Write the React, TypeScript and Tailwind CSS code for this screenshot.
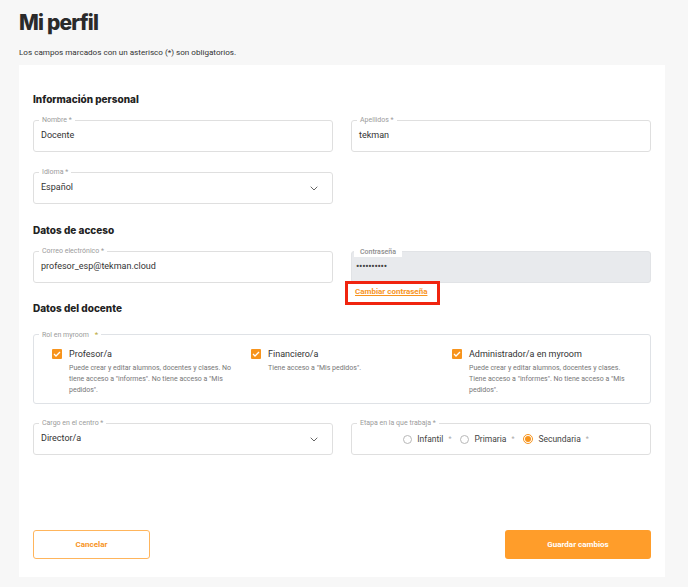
import React from 'react';

const heading = "font-['Inter',sans-serif] font-extrabold text-[10px] leading-[14px] text-[#222]";

const Chevron = () => (
  <svg className="ml-auto shrink-0" width="8" height="5" viewBox="0 0 8 5" fill="none">
    <path d="M0.7 0.7 L4 4 L7.3 0.7" stroke="#555" strokeWidth="0.9" />
  </svg>
);

const Field = ({ label, value, chevron }: { label: string; value: string; chevron?: boolean }) => (
  <div className="relative h-[32px] rounded-[3px] border border-[#dfdfdf] bg-white flex items-center pl-[7px] pr-[14px]">
    <span className="absolute left-[5px] -top-[5px] bg-white px-[3px] text-[7px] leading-[9px] text-[#9b9b9b]">{label}</span>
    <span className="text-[9px] text-[#333]">{value}</span>
    {chevron && <Chevron />}
  </div>
);

const Check = () => (
  <span className="w-[10px] h-[10px] mt-[1px] rounded-[1px] bg-[#f7941d] flex items-center justify-center shrink-0">
    <svg width="8" height="6" viewBox="0 0 8 6" fill="none">
      <path d="M1 3 L3 5 L7 1" stroke="white" strokeWidth="1.3" />
    </svg>
  </span>
);

const roles = [
  { t: 'Profesor/a', d: 'Puede crear y editar alumnos, docentes y clases. No tiene acceso a "informes". No tiene acceso a "Mis pedidos".' },
  { t: 'Financiero/a', d: 'Tiene acceso a "Mis pedidos".' },
  { t: 'Administrador/a en myroom', d: 'Puede crear y editar alumnos, docentes y clases. Tiene acceso a "informes". No tiene acceso a "Mis pedidos".' },
];

const Radio = ({ label, on }: { label: string; on?: boolean }) => (
  <div className="flex items-center">
    {on ? (
      <span className="w-[10px] h-[10px] rounded-full border border-[#f7941d] flex items-center justify-center">
        <span className="w-[6px] h-[6px] rounded-full bg-[#f7941d]" />
      </span>
    ) : (
      <span className="w-[9px] h-[9px] rounded-full border border-[#b8b8b8] bg-white" />
    )}
    <span className="ml-[5px] text-[8.5px] text-[#444]">{label}</span>
    <span className="ml-[5px] text-[7px] text-[#aaa]">*</span>
  </div>
);

export default function App() {
  return (
    <div className="min-h-[587px] bg-[#f7f7f7] px-[19px] pt-[9px] font-['Roboto',sans-serif]">
      <h1 className="font-['Inter',sans-serif] font-extrabold text-[21px] leading-[28px] text-[#2a2a2a] tracking-[-0.8px]">Mi perfil</h1>
      <p className="mt-[9px] text-[8.1px] leading-[12px] text-[#333]">Los campos marcados con un asterisco (*) son obligatorios.</p>

      <div className="mt-[7px] w-[646px] bg-white px-[14px] pt-[27px] pb-[18px]">
        <h2 className={heading}>Información personal</h2>
        <div className="mt-[14px] grid grid-cols-2 gap-x-[18px] gap-y-[20px]">
          <Field label="Nombre *" value="Docente" />
          <Field label="Apellidos *" value="tekman" />
          <Field label="Idioma *" value="Español" chevron />
        </div>

        <h2 className={`${heading} mt-[19px]`}>Datos de acceso</h2>
        <div className="mt-[14px] grid grid-cols-2 gap-x-[18px]">
          <Field label="Correo electrónico *" value="profesor_esp@tekman.cloud" />
          <div className="relative h-[32px] rounded-[3px] border border-[#e1e3e6] bg-[#e8eaed] flex items-center pl-[4px]">
            <span className="absolute left-[2px] -top-[4px] bg-white px-[6px] text-[7px] leading-[9px] font-medium text-[#8d8d8d]">Contraseña</span>
            <span className="text-[10px] leading-[10px] tracking-[-0.3px] text-[#444]">••••••••••</span>
          </div>
        </div>
        <div className="grid grid-cols-2 gap-x-[18px] mt-[4px] h-[10px]">
          <div />
          <div className="relative h-[10px] text-[8px] leading-[10px]">
            <a className="block ml-[4px] font-bold text-[#f7941d] underline">Cambiar contraseña</a>
            <div className="absolute -left-[6px] -top-[6px] w-[95px] h-[24px] border-[3px] border-[#f0240f]" />
          </div>
        </div>

        <h2 className={`${heading} mt-[4px]`}>Datos del docente</h2>
        <div className="relative mt-[19px] h-[70px] rounded-[3px] border border-[#dfe2e6] px-[18px] pt-[13px]">
          <span className="absolute left-[5px] -top-[5px] bg-white px-[3px] text-[7px] leading-[9px] text-[#9b9b9b]">
            Rol en myroom <span className="ml-[4px] text-[#b9a93a] text-[8px]">*</span>
          </span>
          <div className="grid grid-cols-[199px_201px_1fr]">
            {roles.map((r) => (
              <div key={r.t} className="flex gap-[7px]">
                <Check />
                <div>
                  <div className="text-[9px] leading-[12px] text-[#333]">{r.t}</div>
                  <p className="mt-[3px] w-[166px] text-[7px] leading-[11px] text-[#777]">{r.d}</p>
                </div>
              </div>
            ))}
          </div>
        </div>

        <div className="mt-[19px] grid grid-cols-2 gap-x-[18px]">
          <Field label="Cargo en el centro *" value="Director/a" chevron />
          <div className="relative h-[32px] rounded-[3px] border border-[#dfdfdf] flex items-center justify-center gap-[9px] pr-[10px]">
            <span className="absolute left-[5px] -top-[5px] bg-white px-[3px] text-[7px] leading-[9px] text-[#9b9b9b]">Etapa en la que trabaja *</span>
            <Radio label="Infantil" />
            <Radio label="Primaria" />
            <Radio label="Secundaria" on />
          </div>
        </div>

        <div className="mt-[75px] flex justify-between">
          <button className="w-[117px] h-[29px] rounded-[3px] border border-[#ffb55c] text-[8px] font-bold text-[#f7941d]">Cancelar</button>
          <button className="w-[146px] h-[29px] rounded-[3px] bg-[#ff9d2a] text-[8px] font-bold text-white">Guardar cambios</button>
        </div>
      </div>
    </div>
  );
}
